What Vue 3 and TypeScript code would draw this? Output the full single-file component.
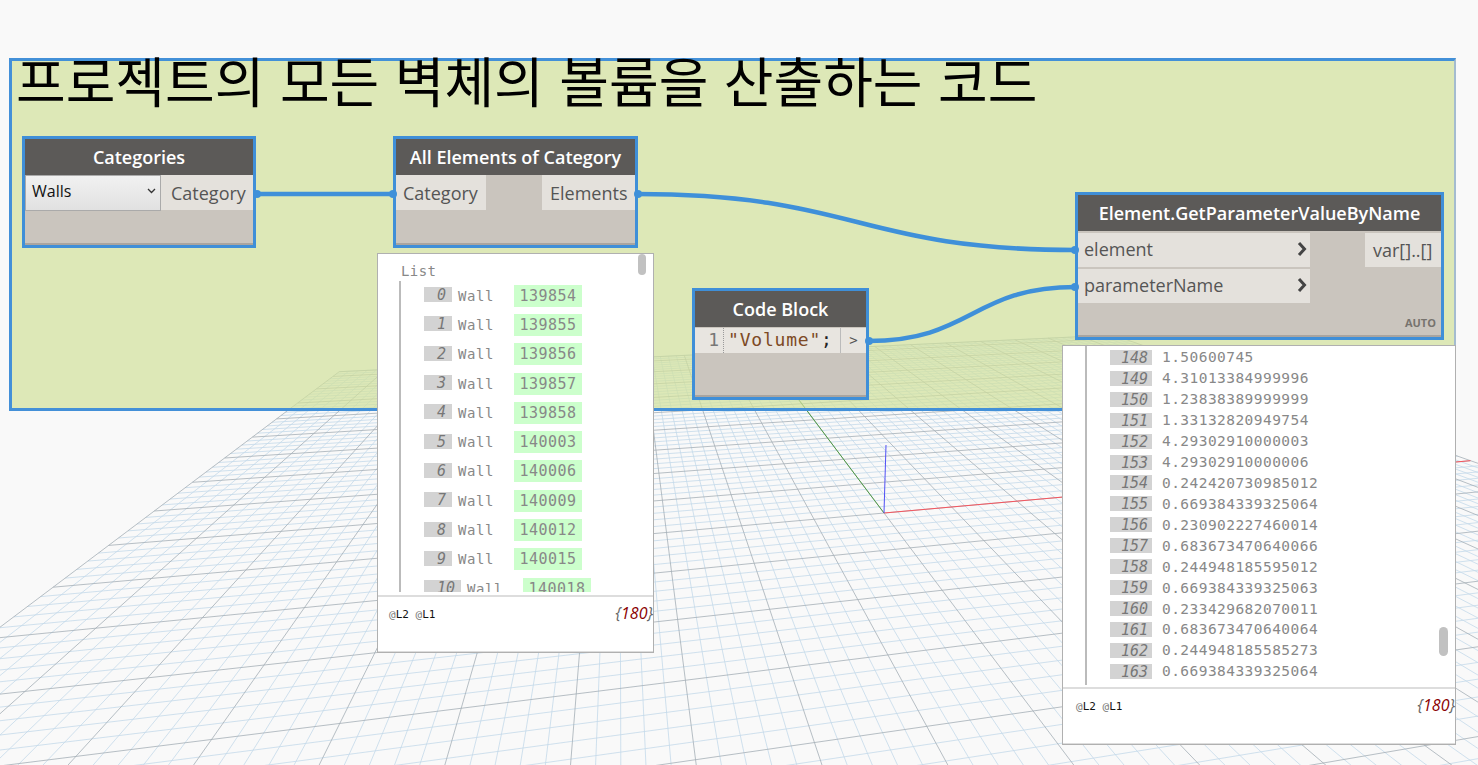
<script setup lang="ts">
type Pt = [number, number];
const a = 0.01724;
const b = 0.09;
const origin: Pt = [884, 513];
const vpU: Pt = [4872, 157];
const vpV: Pt = [619, 161];
const project = (u: number, v: number): Pt => {
  const d = 1 + a * u + b * v;
  return [
    (a * vpU[0] * u + b * vpV[0] * v + origin[0]) / d,
    (a * vpU[1] * u + b * vpV[1] * v + origin[1]) / d,
  ];
};
const uMin = -10;
const uMax = 10;
const vMin = -8;
const vMax = 9.4;
const seg = (p: Pt, q: Pt): string =>
  `M${p[0].toFixed(1)} ${p[1].toFixed(1)}L${q[0].toFixed(1)} ${q[1].toFixed(1)}`;
let minor = "";
let major = "";
for (let i = uMin * 5; i <= uMax * 5; i++) {
  const s = seg(project(i / 5, vMin), project(i / 5, vMax));
  if (i % 5 === 0) major += s;
  else minor += s;
}
for (let i = vMin * 5; i <= Math.floor(vMax * 5); i++) {
  const s = seg(project(uMin, i / 5), project(uMax, i / 5));
  if (i % 5 === 0) major += s;
  else minor += s;
}
major += seg(project(uMin, vMax), project(uMax, vMax));
const redAxis = seg(project(0, 0), project(uMax, 0));
const greenAxis = seg(project(0, 0), project(0, vMax));

const wallIds = [139854, 139855, 139856, 139857, 139858, 140003, 140006, 140009, 140012, 140015, 140018];
const values: [number, string][] = [
  [148, "1.50600745"],
  [149, "4.31013384999996"],
  [150, "1.23838389999999"],
  [151, "1.33132820949754"],
  [152, "4.29302910000003"],
  [153, "4.29302910000006"],
  [154, "0.242420730985012"],
  [155, "0.669384339325064"],
  [156, "0.230902227460014"],
  [157, "0.683673470640066"],
  [158, "0.244948185595012"],
  [159, "0.669384339325063"],
  [160, "0.233429682070011"],
  [161, "0.683673470640064"],
  [162, "0.244948185585273"],
  [163, "0.669384339325064"],
];
</script>

<template>
  <div class="canvas">
    <svg class="layer" width="1478" height="765" viewBox="0 0 1478 765">
      <path :d="minor" class="grid-minor" />
      <path :d="major" class="grid-major" />
      <path :d="greenAxis" class="axis-green" />
      <path :d="redAxis" class="axis-red" />
      <path d="M884 513L886 445" class="axis-blue" />
    </svg>

    <section class="group">
      <h1 class="group-title">프로젝트의 모든 벽체의 볼륨을 산출하는 코드</h1>
    </section>

    <svg class="layer" width="1478" height="765" viewBox="0 0 1478 765">
      <path d="M256 194L394 194" class="wire" />
      <path d="M637 194C857 194 857 250 1076 250" class="wire" />
      <path d="M868 341C972 341 972 287 1076 287" class="wire" />
    </svg>

    <article class="node node-categories">
      <header class="node-head">Categories</header>
      <div class="ports">
        <div class="select">
          <span>Walls</span>
          <svg width="9" height="6" viewBox="0 0 9 6"><path d="M1 1l3.5 3.5L8 1" fill="none" stroke="#333" stroke-width="1.3" /></svg>
        </div>
        <div class="port out-port cat-out">Category</div>
      </div>
    </article>

    <article class="node node-all">
      <header class="node-head">All Elements of Category</header>
      <div class="ports">
        <div class="port in-cat">Category</div>
        <div class="port out-port el-out">Elements</div>
      </div>
    </article>

    <article class="node node-code">
      <header class="node-head">Code Block</header>
      <div class="code-row">
        <span class="code-line">1</span>
        <span class="code-text"><span class="code-str">"Volume"</span>;</span>
        <span class="code-port">&gt;</span>
      </div>
    </article>

    <article class="node node-param">
      <header class="node-head">Element.GetParameterValueByName</header>
      <div class="ports">
        <div class="param-in">
          <div class="param-row">
            <span>element</span>
            <svg width="10" height="16" viewBox="0 0 10 16"><path d="M2 2l5.5 6L2 14" fill="none" stroke="#444" stroke-width="3" /></svg>
          </div>
          <div class="param-row">
            <span>parameterName</span>
            <svg width="10" height="16" viewBox="0 0 10 16"><path d="M2 2l5.5 6L2 14" fill="none" stroke="#444" stroke-width="3" /></svg>
          </div>
        </div>
        <div class="port out-port var-out">var[]..[]</div>
      </div>
      <span class="auto">AUTO</span>
    </article>

    <svg class="layer" width="1478" height="765" viewBox="0 0 1478 765">
      <g class="notch">
        <circle cx="257" cy="194" r="4" />
        <circle cx="393" cy="194" r="4" />
        <circle cx="638" cy="194" r="4" />
        <circle cx="869" cy="341" r="4" />
        <circle cx="1075" cy="250" r="4" />
        <circle cx="1075" cy="287" r="4" />
      </g>
    </svg>

    <aside class="preview preview-walls">
      <div class="preview-body">
        <div class="list-label">List</div>
        <div class="tree wall-tree">
          <div v-for="(id, i) in wallIds" :key="id" class="wall-row">
            <span class="idx" :class="{ wide: i >= 10 }">{{ i }}</span>
            <span class="wall-name">Wall</span>
            <span class="wall-id">{{ id }}</span>
          </div>
        </div>
        <div class="thumb thumb-walls"></div>
      </div>
      <footer class="preview-foot">
        <span class="levels"><i>@</i>L2 <i>@</i>L1</span>
        <span class="count">{<b>180</b>}</span>
      </footer>
    </aside>

    <aside class="preview preview-values">
      <div class="preview-body">
        <div class="tree value-tree">
          <div v-for="row in values" :key="row[0]" class="value-row">
            <span class="idx idx-value">{{ row[0] }}</span>
            <span class="value">{{ row[1] }}</span>
          </div>
        </div>
        <div class="thumb thumb-values"></div>
      </div>
      <footer class="preview-foot">
        <span class="levels"><i>@</i>L2 <i>@</i>L1</span>
        <span class="count">{<b>180</b>}</span>
      </footer>
    </aside>
  </div>
</template>

<style scoped>
.canvas {
  position: relative;
  width: 1478px;
  height: 765px;
  overflow: hidden;
  background: #f9f9f9;
  font-family: "Open Sans", "Liberation Sans", sans-serif;
}
.layer {
  position: absolute;
  left: 0;
  top: 0;
  pointer-events: none;
}
.grid-minor {
  fill: none;
  stroke: #c4d9ea;
  stroke-width: 0.8;
}
.grid-major {
  fill: none;
  stroke: #a4aeb6;
  stroke-width: 0.8;
}
.axis-red {
  fill: none;
  stroke: #f5555e;
  stroke-width: 1;
}
.axis-green {
  fill: none;
  stroke: #4f9a45;
  stroke-width: 1;
}
.axis-blue {
  fill: none;
  stroke: #5050f5;
  stroke-width: 1;
}
.wire {
  fill: none;
  stroke: #3f90d9;
  stroke-width: 4.5;
}
.notch {
  fill: #3f90d9;
}
.group {
  position: absolute;
  left: 9px;
  top: 58px;
  width: 1447px;
  height: 353px;
  box-sizing: border-box;
  border: 3px solid #4390d8;
  border-right: 2px solid #a4bccf;
  background: rgba(209, 225, 155, 0.7);
}
.group-title {
  margin: 0;
  padding: 0 0 0 4px;
  font-family: "Noto Sans CJK KR", "Liberation Sans", sans-serif;
  font-size: 54px;
  font-weight: 400;
  line-height: 38px;
  word-spacing: 3.4px;
  white-space: nowrap;
  color: #000;
}
.node {
  position: absolute;
  box-sizing: border-box;
  border: 3px solid #3f8fd8;
  background: #cac5be;
  box-shadow: inset 0 -2px 0 #a9a5a0;
}
.node-categories {
  left: 22px;
  top: 136px;
  width: 234px;
  height: 112px;
}
.node-all {
  left: 393px;
  top: 136px;
  width: 245px;
  height: 112px;
}
.node-code {
  left: 692px;
  top: 288px;
  width: 177px;
  height: 112px;
}
.node-param {
  left: 1075px;
  top: 192px;
  width: 369px;
  height: 148px;
}
.node-head {
  display: flex;
  align-items: center;
  justify-content: center;
  height: 36px;
  padding-bottom: 1px;
  box-sizing: border-box;
  background: #5c5a58;
  color: #fff;
  font-size: 18px;
  font-weight: 600;
  white-space: nowrap;
}
.ports {
  display: flex;
  align-items: flex-start;
  justify-content: space-between;
}
.port {
  display: flex;
  align-items: center;
  height: 35px;
  box-sizing: border-box;
  background: #e4e1dc;
  color: #555;
  font-size: 18px;
  white-space: nowrap;
}
.select {
  display: flex;
  align-items: center;
  justify-content: space-between;
  box-sizing: border-box;
  width: 136px;
  height: 36px;
  padding: 0 4px 4px 6px;
  border: 1px solid #aaa;
  background: linear-gradient(#f1f1f1, #e1e1e1);
  color: #111;
  font-size: 16px;
}
.cat-out {
  width: 92px;
  padding-left: 10px;
}
.in-cat {
  width: 90px;
  padding-left: 7px;
}
.el-out {
  width: 93px;
  padding-left: 8px;
}
.var-out {
  width: 76px;
  height: 34px;
  padding-left: 8px;
  margin-top: 2px;
}
.code-row {
  display: flex;
  align-items: center;
  height: 25px;
  margin-top: 1px;
  background: #e8e5e0;
  font-family: "DejaVu Sans Mono", "Liberation Mono", monospace;
  font-size: 18px;
  letter-spacing: 0.8px;
  color: #222;
}
.code-line {
  width: 29px;
  box-sizing: border-box;
  padding-right: 3px;
  text-align: right;
  color: #777;
  border-right: 1px dotted #999;
  height: 25px;
  line-height: 23px;
}
.code-text {
  width: 116px;
  height: 25px;
  line-height: 23px;
  padding-left: 4px;
  box-sizing: border-box;
  white-space: nowrap;
}
.code-str {
  color: #7d4a25;
}
.code-port {
  flex: 1;
  height: 25px;
  line-height: 24px;
  text-align: center;
  border-left: 1px solid #bbb;
  font-size: 14px;
  letter-spacing: 0;
  color: #555;
}
.param-in {
  display: flex;
  flex-direction: column;
  width: 232px;
  margin-top: 2px;
}
.param-row {
  display: flex;
  align-items: center;
  justify-content: space-between;
  height: 34px;
  box-sizing: border-box;
  padding: 0 3px 3px 6px;
  background: #e4e1dc;
  color: #555;
  font-size: 18px;
}
.param-row + .param-row {
  border-top: 2px solid #cac5be;
  height: 36px;
}
.auto {
  position: absolute;
  right: 5px;
  bottom: 7px;
  font-size: 11px;
  font-weight: 700;
  color: #77736e;
}
.preview {
  position: absolute;
  box-sizing: border-box;
  display: flex;
  flex-direction: column;
  background: #fff;
  border: 1px solid #b0b0b0;
  font-family: "DejaVu Sans Mono", "Liberation Mono", monospace;
  color: #888;
}
.preview-walls {
  left: 377px;
  top: 253px;
  width: 277px;
  height: 400px;
}
.preview-values {
  left: 1062px;
  top: 345px;
  width: 394px;
  height: 400px;
}
.preview-body {
  position: relative;
  flex: 1;
  min-height: 0;
  overflow: hidden;
}
.list-label {
  padding: 8px 0 0 23px;
  height: 19px;
  line-height: 19px;
  font-size: 14px;
  letter-spacing: 0.4px;
}
.tree {
  box-sizing: border-box;
  border-left: 2px solid #bbb;
}
.wall-tree {
  margin-left: 21px;
  padding: 0 0 0 23px;
  height: 311px;
  overflow: hidden;
}
.wall-row {
  display: flex;
  align-items: center;
  height: 29.3px;
}
.idx {
  flex: none;
  box-sizing: border-box;
  width: 28px;
  height: 15px;
  padding-right: 6px;
  margin-top: -2px;
  background: #d3d3d3;
  color: #777;
  font-size: 15px;
  font-style: italic;
  line-height: 17px;
  text-align: right;
}
.idx.wide {
  width: 37px;
}
.wall-name {
  margin-left: 6px;
  width: 56px;
  flex: none;
  font-size: 14px;
  letter-spacing: 0.6px;
}
.wall-id {
  box-sizing: border-box;
  width: 68px;
  height: 22px;
  line-height: 23px;
  text-align: center;
  background: #ccffcc;
  font-size: 15px;
  letter-spacing: 0.5px;
}
.value-tree {
  margin-left: 22px;
  padding: 1px 0 0 23px;
  height: 339px;
}
.value-row {
  display: flex;
  align-items: center;
  height: 20.93px;
}
.idx-value {
  width: 42px;
  padding-right: 4px;
  margin-top: 0;
  text-align: right;
}
.value {
  margin-left: 10px;
  font-size: 14.5px;
  letter-spacing: 0.45px;
  white-space: nowrap;
}
.thumb {
  position: absolute;
  background: #c1c1c1;
  border-radius: 5px;
}
.thumb-walls {
  left: 260px;
  top: 0;
  width: 8px;
  height: 21px;
}
.thumb-values {
  left: 376px;
  top: 281px;
  width: 9px;
  height: 29px;
}
.preview-foot {
  flex: none;
  display: flex;
  align-items: flex-start;
  justify-content: space-between;
  box-sizing: border-box;
  height: 57px;
  padding: 5px 0 0 11px;
  border-top: 2px solid #ddd;
  border-bottom: 1px solid #ddd;
}
.preview-values .preview-foot {
  padding-left: 13px;
}
.levels {
  margin-top: 6px;
  font-size: 11px;
  color: #111;
}
.levels i {
  font-style: normal;
  color: #777;
}
.count {
  font-family: "Open Sans", sans-serif;
  font-size: 16px;
  font-style: italic;
  color: #666;
}
.count b {
  font-weight: 400;
  color: #8b0000;
}
</style>
